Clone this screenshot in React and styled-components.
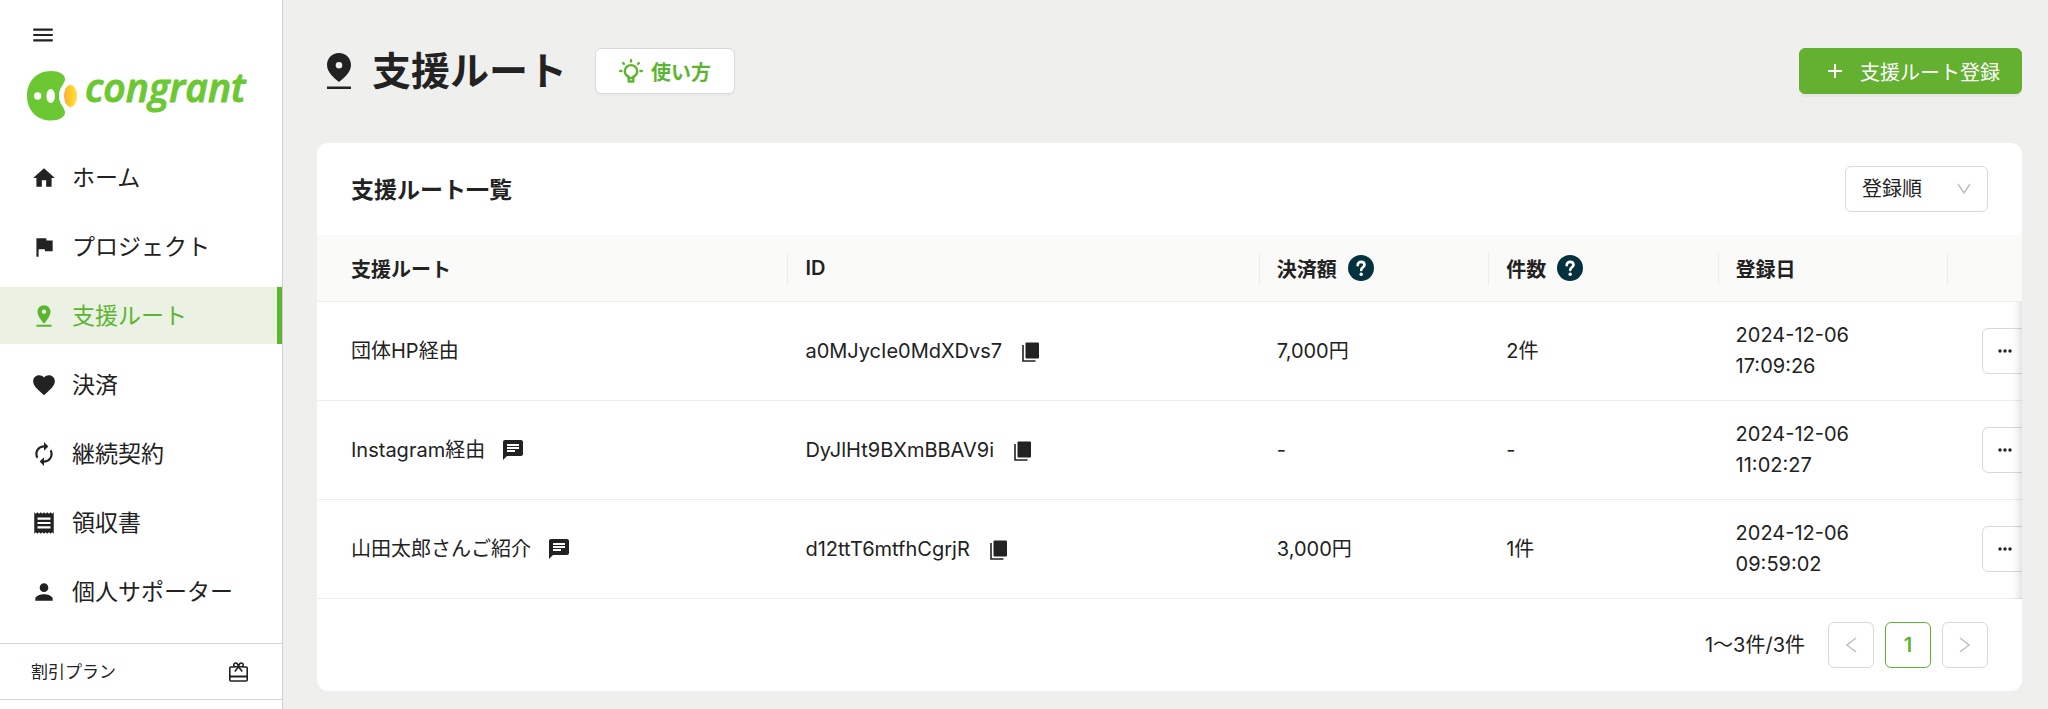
import React from 'react';
import styled, { createGlobalStyle, css } from 'styled-components';
import {
    MdMenu,
    MdHome,
    MdFlag,
    MdPinDrop,
    MdFavorite,
    MdAutorenew,
    MdReceipt,
    MdPerson,
    MdChat,
} from 'react-icons/md';

const GlobalStyle = createGlobalStyle`
    * {
        box-sizing: border-box;
    }

    body {
        margin: 0;
        background-color: #efefed;
        color: #222;
        font-family: Inter, "Noto Sans CJK JP", sans-serif;
        font-size: 20px;
    }

    button, select {
        font: inherit;
        color: inherit;
    }
`

const Page = styled.div`
    display: flex;
    height: 100vh;
    overflow: hidden;
`

const Sidebar = styled.aside`
    display: flex;
    flex-direction: column;
    flex: none;
    width: 283px;
    background-color: white;
    border-right: 1px solid #d0d0d0;
`

const IconButton = styled.button`
    display: inline-flex;
    padding: 0;
    border: none;
    background: none;
    cursor: pointer;
`

const MenuButton = styled(IconButton)`
    align-self: flex-start;
    margin: 22px 0 0 30px;
`

const LogoLink = styled.a`
    display: block;
    height: 72px;
    margin: 7px 0 22px 27px;
`

const NavList = styled.nav`
    display: flex;
    flex-direction: column;
    gap: 12px;
`

const NavItem = styled.a`
    display: flex;
    align-items: center;
    gap: 15px;
    height: 57px;
    padding-left: 31px;
    color: #222;
    font-size: 23px;
    text-decoration: none;

    ${props => props.$active && css`
        color: #5cb531;
        background-color: #ebf1e3;
        border-right: 5px solid #5cb531;
    `}
`

const NavLabel = styled.span`
    padding-bottom: 3px;
`

const PlanLink = styled.a`
    display: flex;
    align-items: center;
    justify-content: space-between;
    height: 57px;
    margin-top: 23px;
    padding: 0 34px 0 31px;
    border-top: 1px solid #d4d4d4;
    border-bottom: 1px solid #d4d4d4;
    color: #222;
    font-size: 17px;
    text-decoration: none;
`

const Main = styled.main`
    flex: 1;
    min-width: 0;
    padding: 48px 26px 18px 34px;
`

const PageHeader = styled.header`
    display: flex;
    align-items: center;
    height: 46px;
    margin-bottom: 49px;
    padding-left: 10px;
`

const Title = styled.h1`
    margin: 0 28px 0 21px;
    font-size: 39px;
    font-weight: 700;
    line-height: 46px;
`

const Button = styled.button`
    display: inline-flex;
    align-items: center;
    justify-content: center;
    height: 46px;
    border: 1px solid #d9d9d9;
    border-radius: 6px;
    background-color: white;
    cursor: pointer;
`

const HelpButton = styled(Button)`
    gap: 8px;
    padding: 0 23px;
    color: #5cb531;
    font-weight: 700;
    box-shadow: 0 2px 0 rgba(0, 0, 0, 0.02);
`

const CreateButton = styled(Button)`
    gap: 18px;
    margin-left: auto;
    padding: 0 21px 0 28px;
    border-color: #64b132;
    background-color: #64b132;
    color: white;
    box-shadow: 0 3px 0 rgba(0, 0, 0, 0.04);
`

const Card = styled.section`
    background-color: white;
    border-radius: 11px;
    overflow: hidden;
`

const CardHeader = styled.div`
    display: flex;
    align-items: center;
    justify-content: space-between;
    height: 92px;
    padding: 0 34px;
`

const CardTitle = styled.h2`
    margin: 0;
    padding-bottom: 3px;
    font-size: 23px;
    font-weight: 700;
`

const SelectWrap = styled.div`
    position: relative;
    width: 143px;

    svg {
        position: absolute;
        right: 17px;
        top: 17px;
        pointer-events: none;
    }
`

const Select = styled.select`
    appearance: none;
    width: 100%;
    height: 46px;
    padding: 0 16px;
    border: 1px solid #d9d9d9;
    border-radius: 6px;
    background-color: white;
`

const TableWrap = styled.div`
    position: relative;
    overflow: hidden;

    &::after {
        content: "";
        position: absolute;
        top: 0;
        right: 0;
        bottom: 0;
        width: 30px;
        box-shadow: inset -12px 0 10px -10px rgba(0, 0, 0, 0.16);
        pointer-events: none;
    }
`

const Table = styled.table`
    width: calc(100% + 41px);
    table-layout: fixed;
    border-collapse: separate;
    border-spacing: 0;
`

const Col = styled.col`
    width: ${props => props.$width};
`

const Th = styled.th`
    position: relative;
    z-index: 1;
    height: 67px;
    padding: 0 17px;
    border-bottom: 1px solid #ededeb;
    background-color: #fafaf8;
    font-weight: 600;
    text-align: left;

    &:first-child {
        padding-left: 34px;
    }

    &:not(:last-child)::after {
        content: "";
        position: absolute;
        top: 18px;
        right: 0;
        width: 1px;
        height: 32px;
        background-color: #ededeb;
    }
`

const Td = styled.td`
    padding: 18px 17px;
    border-bottom: 1px solid #ededeb;
    line-height: 31px;

    &:first-child {
        padding-left: 34px;
    }

    &:last-child {
        padding: 0 0 0 34px;
    }
`

const CellContent = styled.div`
    display: flex;
    align-items: center;
    gap: ${props => props.$gap || '16px'};
`

const MoreButton = styled(Button)`
    width: 46px;
    padding: 0;
`

const Footer = styled.div`
    display: flex;
    align-items: center;
    justify-content: flex-end;
    gap: 11px;
    padding: 23px 34px;
`

const Total = styled.span`
    margin-right: 12px;
    padding-bottom: 3px;
`

const PageButton = styled(Button)`
    width: 46px;
    color: #bfbfbf;

    ${props => props.$current && css`
        border-color: #5cb531;
        color: #5cb531;
        font-weight: 600;
    `}
`

const Logo = () => (
    <svg width="232" height="72" viewBox="0 -16 232 72" role="img" aria-label="congrant">
        <defs>
            <linearGradient id="seed" x1="0" x2="1">
                <stop offset="0" stopColor="#f9ac3c" />
                <stop offset="0.5" stopColor="#ffcb25" />
                <stop offset="1" stopColor="#ffe04a" />
            </linearGradient>
        </defs>
        <path
            fill="#6cc832"
            d="M24 0C9 0 0 11 0 24.700S9 49.500 24 49.500C32 49.500 38 46 38 41.500C38 36 32 34 32 24.700S38 13.500 38 8C38 3.500 32 0 24 0z"
        />
        <circle cx="10.700" cy="25" r="3.700" fill="white" />
        <ellipse cx="23.700" cy="25" rx="4.300" ry="7" fill="white" />
        <ellipse cx="43.500" cy="25" rx="6.500" ry="11" fill="url(#seed)" />
        <text
            x="58"
            y="31"
            fill="#6cc832"
            stroke="#6cc832"
            strokeWidth="1"
            strokeLinejoin="round"
            fontFamily="Open Sans, sans-serif"
            fontSize="39"
            fontStyle="italic"
            fontWeight="600"
        >
            congrant
        </text>
    </svg>
)

const GiftIcon = () => (
    <svg width="19" height="20" viewBox="0 0 19 20" fill="none" stroke="currentColor" strokeWidth="1.600" strokeLinejoin="round">
        <path d="M5.500 5H1.800a1 1 0 0 0-1 1v12a1 1 0 0 0 1 1h15.400a1 1 0 0 0 1-1V6a1 1 0 0 0-1-1h-3.700" />
        <path d="M1 14.500h17" strokeWidth="2" />
        <path d="M9.500 4.500C9 2.300 8 1 6.700 1a1.900 1.900 0 0 0 0 3.800zM9.500 4.500C10 2.300 11 1 12.300 1a1.900 1.900 0 0 1 0 3.800z" />
        <path d="M9.500 4.800l-3.700 4.700M9.500 4.800l3.700 4.700" />
    </svg>
)

const TitlePin = () => (
    <svg width="24" height="36" viewBox="0 0 24 36" fill="currentColor">
        <path
            fillRule="evenodd"
            d="M12 0C5 0 0 5.500 0 12c0 7 6.500 12.500 12 17 5.500-4.500 12-10 12-17C24 5.500 19 0 12 0zm0 15.500a3.300 3.300 0 1 1 0-6.600 3.300 3.300 0 0 1 0 6.600z"
        />
        <path d="M0 33.500h24v2.500H0z" />
    </svg>
)

const BulbIcon = () => (
    <svg width="24" height="24" viewBox="0 0 24 24" fill="none" stroke="currentColor" strokeWidth="2.400" strokeLinecap="round" strokeLinejoin="round">
        <path d="M9.700 19v-1.300C7.200 16.700 5.800 14.800 5.800 12.300a6.200 6.200 0 0 1 12.400 0c0 2.500-1.400 4.400-3.900 5.400V19z" />
        <path d="M9.700 19v3.500h4.600V19" />
        <path d="M12 1.200v1.300M4.200 4.200l.8.800M19.800 4.200l-.8.800M1.200 12h1.300M21.500 12h1.300" />
    </svg>
)

const PlusIcon = () => (
    <svg width="14" height="14" viewBox="0 0 14 14" stroke="currentColor" strokeWidth="2">
        <path d="M7 0v14M0 7h14" />
    </svg>
)

const CopyIcon = () => (
    <svg width="18" height="22" viewBox="0 0 18 22">
        <rect x="3.500" y="2.500" width="13.500" height="16" rx="1" fill="currentColor" />
        <path d="M1 5v16h12.500" fill="none" stroke="currentColor" strokeWidth="1.600" />
    </svg>
)

const HelpIcon = () => (
    <svg width="26" height="26" viewBox="0 0 26 26" fill="none">
        <circle cx="13" cy="13" r="13" fill="#04313e" />
        <path
            d="M9.700 10.200c0-2 1.500-3.300 3.400-3.300s3.400 1.200 3.400 3c0 2.300-3.300 2.600-3.300 5.100"
            stroke="white"
            strokeWidth="2.600"
            strokeLinecap="round"
        />
        <circle cx="13.200" cy="19.200" r="1.700" fill="white" />
    </svg>
)

const Chevron = ({ d, width, height }) => (
    <svg width={width} height={height} viewBox={`0 0 ${width} ${height}`} fill="none" stroke="#bfbfbf" strokeWidth="1.500">
        <path d={d} />
    </svg>
)

const DotsIcon = () => (
    <svg width="14" height="4" viewBox="0 0 14 4" fill="currentColor">
        <circle cx="2" cy="2" r="1.700" />
        <circle cx="7" cy="2" r="1.700" />
        <circle cx="12" cy="2" r="1.700" />
    </svg>
)

const navItems = [
    { label: 'ホーム', Icon: MdHome },
    { label: 'プロジェクト', Icon: MdFlag },
    { label: '支援ルート', Icon: MdPinDrop, active: true },
    { label: '決済', Icon: MdFavorite },
    { label: '継続契約', Icon: MdAutorenew },
    { label: '領収書', Icon: MdReceipt },
    { label: '個人サポーター', Icon: MdPerson },
]

const routes = [
    { name: '団体HP経由', id: 'a0MJycIe0MdXDvs7', amount: '7,000円', count: '2件', date: '2024-12-06', time: '17:09:26' },
    { name: 'Instagram経由', memo: true, id: 'DyJlHt9BXmBBAV9i', amount: '-', count: '-', date: '2024-12-06', time: '11:02:27' },
    { name: '山田太郎さんご紹介', memo: true, id: 'd12ttT6mtfhCgrjR', amount: '3,000円', count: '1件', date: '2024-12-06', time: '09:59:02' },
]

const App = () => {
    return (
        <Page>
            <GlobalStyle />
            <Sidebar>
                <MenuButton type="button" aria-label="メニュー">
                    <MdMenu size={26} />
                </MenuButton>
                <LogoLink href="#">
                    <Logo />
                </LogoLink>
                <NavList>
                    {navItems.map(({ label, Icon, active }) => (
                        <NavItem key={label} href="#" $active={active}>
                            <Icon size={26} />
                            <NavLabel>{label}</NavLabel>
                        </NavItem>
                    ))}
                </NavList>
                <PlanLink href="#">
                    <NavLabel>割引プラン</NavLabel>
                    <GiftIcon />
                </PlanLink>
            </Sidebar>
            <Main>
                <PageHeader>
                    <TitlePin />
                    <Title>支援ルート</Title>
                    <HelpButton type="button">
                        <BulbIcon />
                        使い方
                    </HelpButton>
                    <CreateButton type="button">
                        <PlusIcon />
                        支援ルート登録
                    </CreateButton>
                </PageHeader>
                <Card>
                    <CardHeader>
                        <CardTitle>支援ルート一覧</CardTitle>
                        <SelectWrap>
                            <Select aria-label="並び順" defaultValue="登録順">
                                <option>登録順</option>
                            </Select>
                            <Chevron width={14} height={12} d="M1 1l6 9 6-9" />
                        </SelectWrap>
                    </CardHeader>
                    <TableWrap>
                        <Table>
                            <colgroup>
                                <Col $width="27%" />
                                <Col $width="27%" />
                                <Col />
                                <Col />
                                <Col />
                                <Col $width="115px" />
                            </colgroup>
                            <thead>
                                <tr>
                                    <Th>支援ルート</Th>
                                    <Th>ID</Th>
                                    <Th>
                                        <CellContent $gap="11px">決済額<HelpIcon /></CellContent>
                                    </Th>
                                    <Th>
                                        <CellContent $gap="11px">件数<HelpIcon /></CellContent>
                                    </Th>
                                    <Th>登録日</Th>
                                    <Th />
                                </tr>
                            </thead>
                            <tbody>
                                {routes.map(route => (
                                    <tr key={route.id}>
                                        <Td>
                                            <CellContent>
                                                {route.name}
                                                {route.memo && <MdChat size={24} />}
                                            </CellContent>
                                        </Td>
                                        <Td>
                                            <CellContent $gap="20px">
                                                {route.id}
                                                <IconButton type="button" aria-label="コピー">
                                                    <CopyIcon />
                                                </IconButton>
                                            </CellContent>
                                        </Td>
                                        <Td>{route.amount}</Td>
                                        <Td>{route.count}</Td>
                                        <Td>
                                            {route.date}<br />{route.time}
                                        </Td>
                                        <Td>
                                            <MoreButton type="button" aria-label="その他">
                                                <DotsIcon />
                                            </MoreButton>
                                        </Td>
                                    </tr>
                                ))}
                            </tbody>
                        </Table>
                    </TableWrap>
                    <Footer>
                        <Total>1〜3件/3件</Total>
                        <PageButton type="button" aria-label="前へ">
                            <Chevron width={12} height={16} d="M11 1L2 8l9 7" />
                        </PageButton>
                        <PageButton type="button" $current>1</PageButton>
                        <PageButton type="button" aria-label="次へ">
                            <Chevron width={12} height={16} d="M1 1l9 7-9 7" />
                        </PageButton>
                    </Footer>
                </Card>
            </Main>
        </Page>
    )
}

export default App;
